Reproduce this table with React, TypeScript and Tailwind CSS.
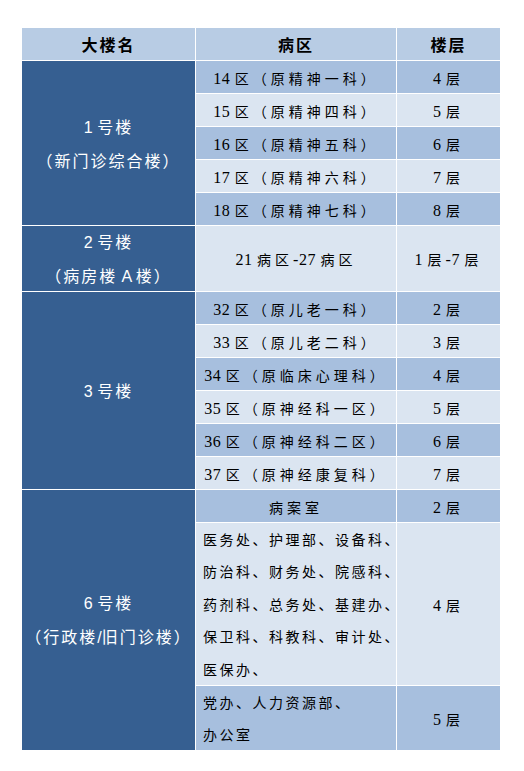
import React from "react";

const isAscii = (s: string) => /^[\x00-\x7F]+$/.test(s);

function Mix({ text, a, c }: { text: string; a: string; c: string }) {
  const parts = text.split(/([\x00-\x7F]+)/).filter(Boolean);
  return (
    <>
      {parts.map((p, i) =>
        isAscii(p) ? (
          <span key={i} className={a}>
            {p}
          </span>
        ) : (
          <span key={i} className={c}>
            {p}
          </span>
        )
      )}
    </>
  );
}

const SER = "font-['Liberation_Serif',serif] text-[16px] tracking-[0.5px] whitespace-pre";
const CJK = "font-['Noto_Sans_CJK_SC',sans-serif] text-[14px] tracking-[4px]";
const CJK2 = "font-['Noto_Sans_CJK_SC',sans-serif] tracking-[2.5px]";
const WSANS = "font-['Liberation_Sans',sans-serif] tracking-[0px] whitespace-pre";
const WCJK = "font-['Noto_Sans_CJK_SC',sans-serif] tracking-[2px]";

const DARK = "bg-[#A7BFDE]";
const LIGHT = "bg-[#DBE5F1]";

function Cell({ text, bg }: { text: string; bg: string }) {
  return (
    <div className={`${bg} flex items-center justify-center text-[14px] leading-[20px] text-black whitespace-nowrap`}>
      <span className="pt-[2px]">
        <Mix text={text} a={SER} c={CJK} />
      </span>
    </div>
  );
}

function Building({ lines, span }: { lines: string[]; span: string }) {
  return (
    <div className={`${span} bg-[#365F91] flex flex-col items-center justify-center text-white text-[16px] leading-[32px] whitespace-nowrap`}>
      {lines.map((l, i) => (
        <div key={i}>
          <Mix text={l} a={WSANS} c={WCJK} />
        </div>
      ))}
    </div>
  );
}

function Multi({ lines, bg }: { lines: string[]; bg: string }) {
  return (
    <div className={`${bg} flex flex-col justify-center pl-[7px] text-[14px] text-black leading-[32.5px] whitespace-nowrap`}>
      {lines.map((l, i) => (
        <div key={i} className={CJK2}>
          {l}
        </div>
      ))}
    </div>
  );
}

export default function App() {
  const hdr = "bg-[#B8CCE4] flex items-center justify-center text-[16px] font-bold text-black tracking-[2px] font-['Noto_Sans_CJK_SC',sans-serif]";
  return (
    <div className="w-[524px] h-[771px] bg-white pt-[28px] pl-[22px]">
      <div className="grid w-[478px] grid-cols-[173px_200px_103px] grid-rows-[32px_32px_32px_32px_32px_32px_65px_32px_32px_32px_32px_32px_32px_32px_162px_64px] gap-px bg-white">
        <div className={hdr}>大楼名</div>
        <div className={hdr}>病区</div>
        <div className={hdr}>楼层</div>

        <Building span="row-span-5" lines={["1 号楼", "（新门诊综合楼）"]} />
        <Cell bg={DARK} text="14 区（原精神一科）" />
        <Cell bg={DARK} text="4 层" />
        <Cell bg={LIGHT} text="15 区（原精神四科）" />
        <Cell bg={LIGHT} text="5 层" />
        <Cell bg={DARK} text="16 区（原精神五科）" />
        <Cell bg={DARK} text="6 层" />
        <Cell bg={LIGHT} text="17 区（原精神六科）" />
        <Cell bg={LIGHT} text="7 层" />
        <Cell bg={DARK} text="18 区（原精神七科）" />
        <Cell bg={DARK} text="8 层" />

        <Building span="row-span-1" lines={["2 号楼", "（病房楼 A 楼）"]} />
        <Cell bg={LIGHT} text="21 病区-27 病区" />
        <Cell bg={LIGHT} text="1 层-7 层" />

        <Building span="row-span-6" lines={["3 号楼"]} />
        <Cell bg={DARK} text="32 区（原儿老一科）" />
        <Cell bg={DARK} text="2 层" />
        <Cell bg={LIGHT} text="33 区（原儿老二科）" />
        <Cell bg={LIGHT} text="3 层" />
        <Cell bg={DARK} text="34 区（原临床心理科）" />
        <Cell bg={DARK} text="4 层" />
        <Cell bg={LIGHT} text="35 区（原神经科一区）" />
        <Cell bg={LIGHT} text="5 层" />
        <Cell bg={DARK} text="36 区（原神经科二区）" />
        <Cell bg={DARK} text="6 层" />
        <Cell bg={LIGHT} text="37 区（原神经康复科）" />
        <Cell bg={LIGHT} text="7 层" />

        <Building span="row-span-3" lines={["6 号楼", "（行政楼/旧门诊楼）"]} />
        <Cell bg={DARK} text="病案室" />
        <Cell bg={DARK} text="2 层" />
        <Multi
          bg={LIGHT}
          lines={[
            "医务处、护理部、设备科、",
            "防治科、财务处、院感科、",
            "药剂科、总务处、基建办、",
            "保卫科、科教科、审计处、",
            "医保办、",
          ]}
        />
        <Cell bg={LIGHT} text="4 层" />
        <Multi bg={DARK} lines={["党办、人力资源部、", "办公室"]} />
        <Cell bg={DARK} text="5 层" />
      </div>
    </div>
  );
}
